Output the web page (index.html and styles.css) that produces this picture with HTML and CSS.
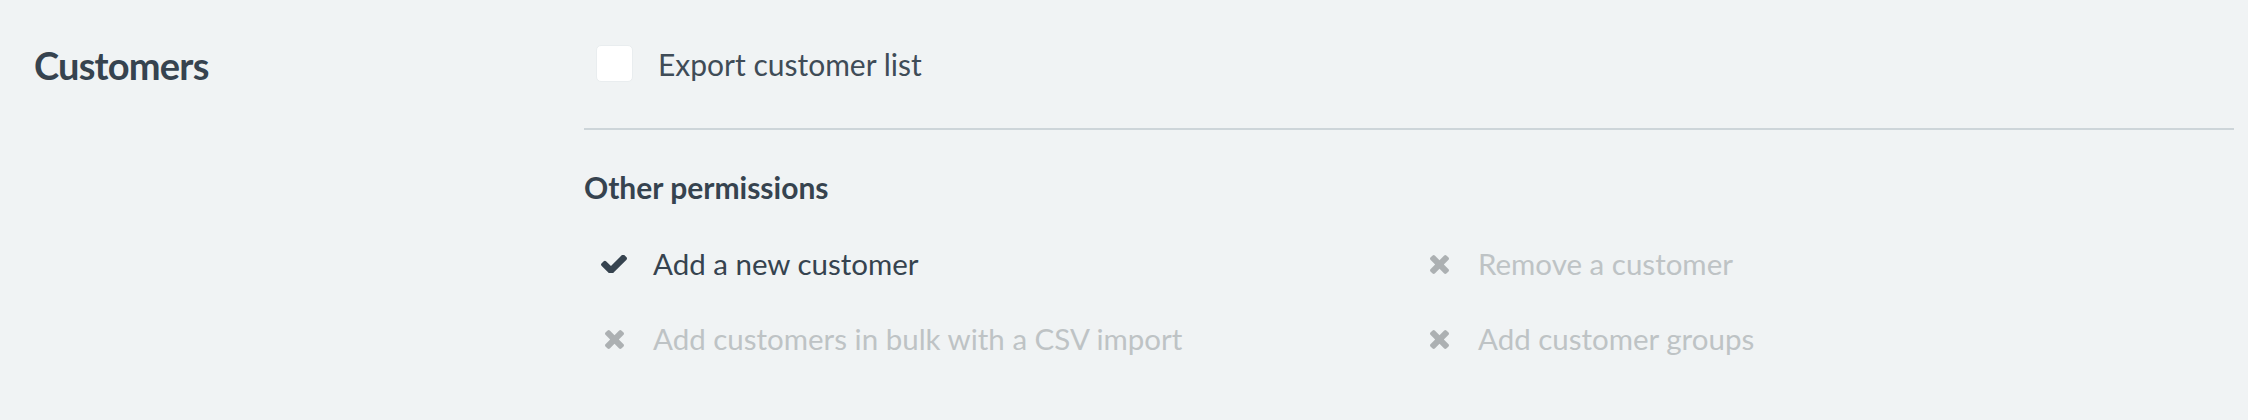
FILE: index.html
```html
<!DOCTYPE html>
<html lang="en">
<head>
<meta charset="utf-8">
<title>Customers permissions</title>
<link rel="stylesheet" href="styles.css">
</head>
<body>
<section class="perm-section">
  <h2 class="perm-title">Customers</h2>
  <div class="perm-body">
    <label class="perm-toggle">
      <span class="checkbox"></span>
      <span class="toggle-text">Export customer list</span>
    </label>
    <hr class="divider">
    <h3 class="other-title">Other permissions</h3>
    <ul class="perm-grid">
      <li class="perm-item granted">
        <span class="perm-icon">
          <svg class="icon-check" viewBox="121 362 1550 1064" width="26" height="18"><path d="M1671 566q0 40-28 68l-724 724-136 136q-28 28-68 28t-68-28l-136-136-362-362q-28-28-28-68t28-68l136-136q28-28 68-28t68 28l294 295 656-657q28-28 68-28t68 28l136 136q28 28 28 68z"/></svg>
        </span>
        <span class="perm-text">Add a new customer</span>
      </li>
      <li class="perm-item denied">
        <span class="perm-icon">
          <svg class="icon-x" viewBox="110 366 1188 1188" width="19" height="19"><path d="M1298 1322q0 40-28 68l-136 136q-28 28-68 28t-68-28l-294-294-294 294q-28 28-68 28t-68-28l-136-136q-28-28-28-68t28-68l294-294-294-294q-28-28-28-68t28-68l136-136q28-28 68-28t68 28l294 294 294-294q28-28 68-28t68 28l136 136q28 28 28 68t-28 68l-294 294 294 294q28 28 28 68z"/></svg>
        </span>
        <span class="perm-text">Remove a customer</span>
      </li>
      <li class="perm-item denied">
        <span class="perm-icon">
          <svg class="icon-x" viewBox="110 366 1188 1188" width="19" height="19"><path d="M1298 1322q0 40-28 68l-136 136q-28 28-68 28t-68-28l-294-294-294 294q-28 28-68 28t-68-28l-136-136q-28-28-28-68t28-68l294-294-294-294q-28-28-28-68t28-68l136-136q28-28 68-28t68 28l294 294 294-294q28-28 68-28t68 28l136 136q28 28 28 68t-28 68l-294 294 294 294q28 28 28 68z"/></svg>
        </span>
        <span class="perm-text">Add customers in bulk with a CSV import</span>
      </li>
      <li class="perm-item denied">
        <span class="perm-icon">
          <svg class="icon-x" viewBox="110 366 1188 1188" width="19" height="19"><path d="M1298 1322q0 40-28 68l-136 136q-28 28-68 28t-68-28l-294-294-294 294q-28 28-68 28t-68-28l-136-136q-28-28-28-68t28-68l294-294-294-294q-28-28-28-68t28-68l136-136q28-28 68-28t68 28l294 294 294-294q28-28 68-28t68 28l136 136q28 28 28 68t-28 68l-294 294 294 294q28 28 28 68z"/></svg>
        </span>
        <span class="perm-text">Add customer groups</span>
      </li>
    </ul>
  </div>
</section>
</body>
</html>
```
FILE: styles.css
```css
html, body {
  margin: 0;
  padding: 0;
  background: #f0f3f4;
}

body {
  font-family: Lato, "Open Sans", sans-serif;
  color: #36434f;
  height: 420px;
  overflow: hidden;
}

.perm-section {
  display: flex;
  align-items: flex-start;
  padding: 41px 14px 0 0;
}

.perm-title {
  width: 550px;
  flex: 0 0 550px;
  margin: 0;
  padding-left: 34px;
  font-size: 38px;
  line-height: 48px;
  letter-spacing: -0.8px;
  font-weight: 700;
  color: #36434f;
}

.perm-body {
  flex: 1;
  padding-top: 4px;
}

.perm-toggle {
  display: flex;
  align-items: center;
  padding-left: 12px;
  height: 37px;
}

.checkbox {
  width: 37px;
  height: 37px;
  box-sizing: border-box;
  background: #ffffff;
  border: 1px solid #e9edef;
  border-radius: 5px;
  margin-right: 25px;
}

.toggle-text {
  font-size: 30px;
  line-height: 36px;
  color: #3f4c57;
}

.divider {
  border: 0;
  height: 2px;
  background: #cdd5d9;
  margin: 46px 0 0 0;
}

.other-title {
  margin: 39px 0 0 0;
  font-size: 30px;
  line-height: 36px;
  font-weight: 700;
  color: #36434f;
}

.perm-grid {
  list-style: none;
  margin: 41px 0 0 0;
  padding: 0;
  display: grid;
  grid-template-columns: 1fr 1fr;
  row-gap: 39px;
}

.perm-item {
  display: flex;
  align-items: center;
  height: 36px;
}

.perm-icon {
  width: 40px;
  margin-left: 10px;
  margin-right: 19px;
  display: flex;
  justify-content: center;
  align-items: center;
}

.perm-text {
  font-size: 29.5px;
  line-height: 36px;
}

.granted .perm-text { color: #36434f; }
.granted .perm-icon svg { fill: #36434f; }

.denied .perm-text { color: #bec3c5; }
.denied .perm-icon svg { fill: #acb0b2; }
```
